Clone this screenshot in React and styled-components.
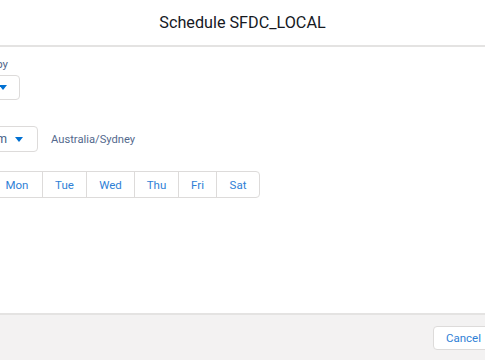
import React from 'react';
import styled, { createGlobalStyle } from 'styled-components';

const GlobalStyle = createGlobalStyle`
  html, body {
    margin: 0;
    padding: 0;
    overflow: hidden;
    background: #fff;
    font-family: Roboto, "Liberation Sans", sans-serif;
  }
`;

const Modal = styled.div`
  width: 485px;
  height: 360px;
  display: flex;
  flex-direction: column;
  overflow: hidden;
`;

const Header = styled.header`
  height: 45px;
  flex-shrink: 0;
  display: flex;
  align-items: center;
  justify-content: center;
  border-bottom: 2px solid #e4e3e2;
`;

const Title = styled.h2`
  margin: 0;
  font-size: 16.2px;
  font-weight: 400;
  color: #16191f;
`;

const Body = styled.div`
  flex: 1;
  padding-top: 9px;
`;

const Form = styled.div`
  margin-left: -60px;
  display: flex;
  flex-direction: column;
  align-items: flex-start;
`;

const Label = styled.div`
  font-size: 11.5px;
  line-height: 16px;
  color: #54698d;
  margin-bottom: 3px;
  padding-left: 5px;
`;

const Row = styled.div`
  display: flex;
  align-items: center;
  gap: 13px;
  margin-top: ${p => p.$top || 0}px;
`;

const Select = styled.div`
  height: ${p => p.$h}px;
  width: ${p => p.$w}px;
  box-sizing: border-box;
  border: 1px solid #dddbda;
  border-radius: 4px;
  display: flex;
  align-items: center;
  justify-content: flex-end;
  gap: 8px;
  padding: 0 ${p => p.$pr}px 0 12px;
  font-size: 12px;
  color: #3e5b85;
  white-space: nowrap;
`;

const Caret = styled.span`
  flex-shrink: 0;
  width: 0;
  height: 0;
  border-left: 4.5px solid transparent;
  border-right: 4.5px solid transparent;
  border-top: 5.5px solid #0070d2;
`;

const Zone = styled.span`
  font-size: 11.2px;
  color: #54698d;
`;

const DayGroup = styled.div`
  display: flex;
  height: 27px;
  margin-top: 19px;
  border: 1px solid #dddbda;
  border-radius: 4px;
  box-sizing: border-box;
`;

const Day = styled.button`
  all: unset;
  box-sizing: border-box;
  height: 100%;
  width: ${p => p.$w}px;
  text-align: center;
  font-size: 11.5px;
  color: #2f7fd6;
  font-family: inherit;
  border-left: ${p => (p.$first ? 'none' : '1px solid #dddbda')};
`;

const Footer = styled.footer`
  height: 45px;
  flex-shrink: 0;
  background: #f3f2f2;
  border-top: 2px solid #e4e3e2;
  display: flex;
  align-items: center;
  justify-content: flex-end;
`;

const Button = styled.button`
  all: unset;
  box-sizing: border-box;
  height: 24px;
  width: 72px;
  margin-right: -20px;
  padding-left: 12px;
  background: #fff;
  border: 1px solid #dddbda;
  border-radius: 4px;
  color: #2f7fd6;
  font-size: 11.5px;
  font-family: inherit;
`;

const days = [
  ['Sun', 50],
  ['Mon', 51],
  ['Tue', 44],
  ['Wed', 48],
  ['Thu', 44],
  ['Fri', 38],
  ['Sat', 43],
];

export default function App() {
  return (
    <Modal>
      <GlobalStyle />
      <Header>
        <Title>Schedule SFDC_LOCAL</Title>
      </Header>
      <Body>
        <Form>
          <Label>Repeat copy</Label>
          <Select $h={25} $w={80} $pr={12}>
            Weekly <Caret />
          </Select>
          <Row $top={26}>
            <Select $h={26} $w={98} $pr={14}>
              6:00 am <Caret />
            </Select>
            <Zone>Australia/Sydney</Zone>
          </Row>
          <DayGroup>
            {days.map(([d, w], i) => (
              <Day key={d} $w={w} $first={i === 0}>
                {d}
              </Day>
            ))}
          </DayGroup>
        </Form>
      </Body>
      <Footer>
        <Button>Cancel</Button>
      </Footer>
    </Modal>
  );
}
